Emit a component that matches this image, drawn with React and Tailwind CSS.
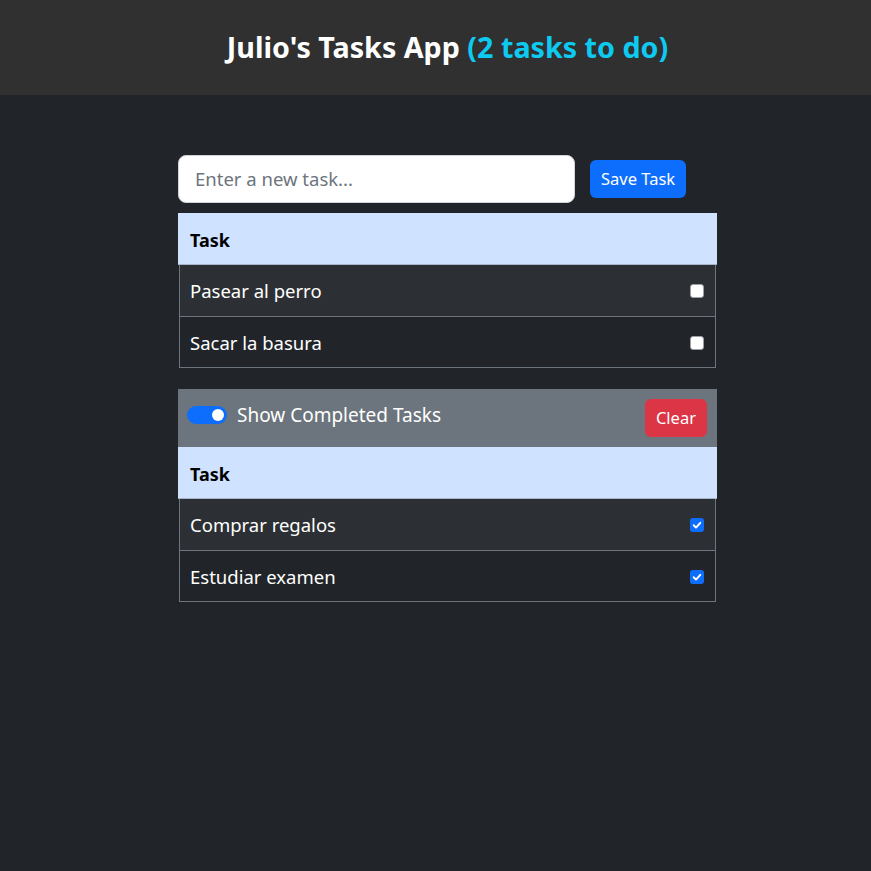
import React from "react";

function Check({ checked }) {
  if (checked) {
    return (
      <div className="w-[14px] h-[14px] rounded-[3px] bg-[#0d6efd] flex items-center justify-center">
        <svg width="12" height="12" viewBox="0 0 20 20">
          <path d="M4.5 10.5l3.8 3.8 7.2-8" fill="none" stroke="#fff" strokeWidth="3.2" strokeLinecap="round" strokeLinejoin="round" />
        </svg>
      </div>
    );
  }
  return <div className="w-[14px] h-[14px] rounded-[3px] bg-white border border-[#9aa0a6]" />;
}

function TaskTable({ rows, checked }) {
  return (
    <div className="w-[539px]">
      <div className="h-[52px] bg-[#cfe2ff] flex items-center px-[12px] pt-[3px] text-[18px] font-bold text-black border-b border-[#a6b5cc]">
        Task
      </div>
      <div className="border-x border-b border-[#6c757d] ml-[1px] mr-[1px]">
        {rows.map((r, i) => (
          <div
            key={r}
            className={`h-[51px] flex items-center justify-between pl-[10px] pr-[11px] pt-[1px] text-[18.5px] text-white ${i % 2 === 0 ? "bg-[#2c3034]" : "bg-[#212529]"} ${i > 0 ? "border-t border-[#6c757d]" : ""}`}
          >
            <span>{r}</span>
            <Check checked={checked} />
          </div>
        ))}
      </div>
    </div>
  );
}

export default function App() {
  return (
    <div className="min-h-[871px] bg-[#212529]" style={{ fontFamily: '"Noto Sans", sans-serif' }}>
      <div className="h-[95px] bg-[#303030] flex items-center">
        <div className="ml-[178px] w-[539px] text-center text-[28.7px] font-bold text-white leading-none">
          Julio's Tasks App <span className="text-[#0dcaf0]">(2 tasks to do)</span>
        </div>
      </div>
      <div className="ml-[178px] w-[539px] pt-[60px] flex flex-col">
        <div className="flex items-center gap-[15px] h-[48px]">
          <div className="w-[397px] h-[48px] bg-white rounded-[8px] border border-[#ced4da] flex items-center px-[16px] text-[18.5px] text-[#6c757d]">
            Enter a new task...
          </div>
          <div className="h-[38px] px-[11px] bg-[#0d6efd] rounded-[6px] text-white text-[16.5px] flex items-center">
            Save Task
          </div>
        </div>
        <div className="mt-[10px]">
          <TaskTable rows={["Pasear al perro", "Sacar la basura"]} checked={false} />
        </div>
        <div className="mt-[21px] w-[539px]">
          <div className="h-[58px] bg-[#6c757d] flex items-center justify-between pl-[9px] pr-[10px]">
            <div className="flex items-center gap-[10px] -mt-[7px]">
              <div className="w-[40px] h-[18px] rounded-full bg-[#0d6efd] flex items-center justify-end pr-[3px]">
                <div className="w-[12px] h-[12px] rounded-full bg-white" />
              </div>
              <span className="text-white text-[19px] leading-[26px]">Show Completed Tasks</span>
            </div>
            <div className="h-[38px] px-[11px] bg-[#dc3545] rounded-[6px] text-white text-[16.5px] flex items-center">
              Clear
            </div>
          </div>
          <TaskTable rows={["Comprar regalos", "Estudiar examen"]} checked={true} />
        </div>
      </div>
    </div>
  );
}
